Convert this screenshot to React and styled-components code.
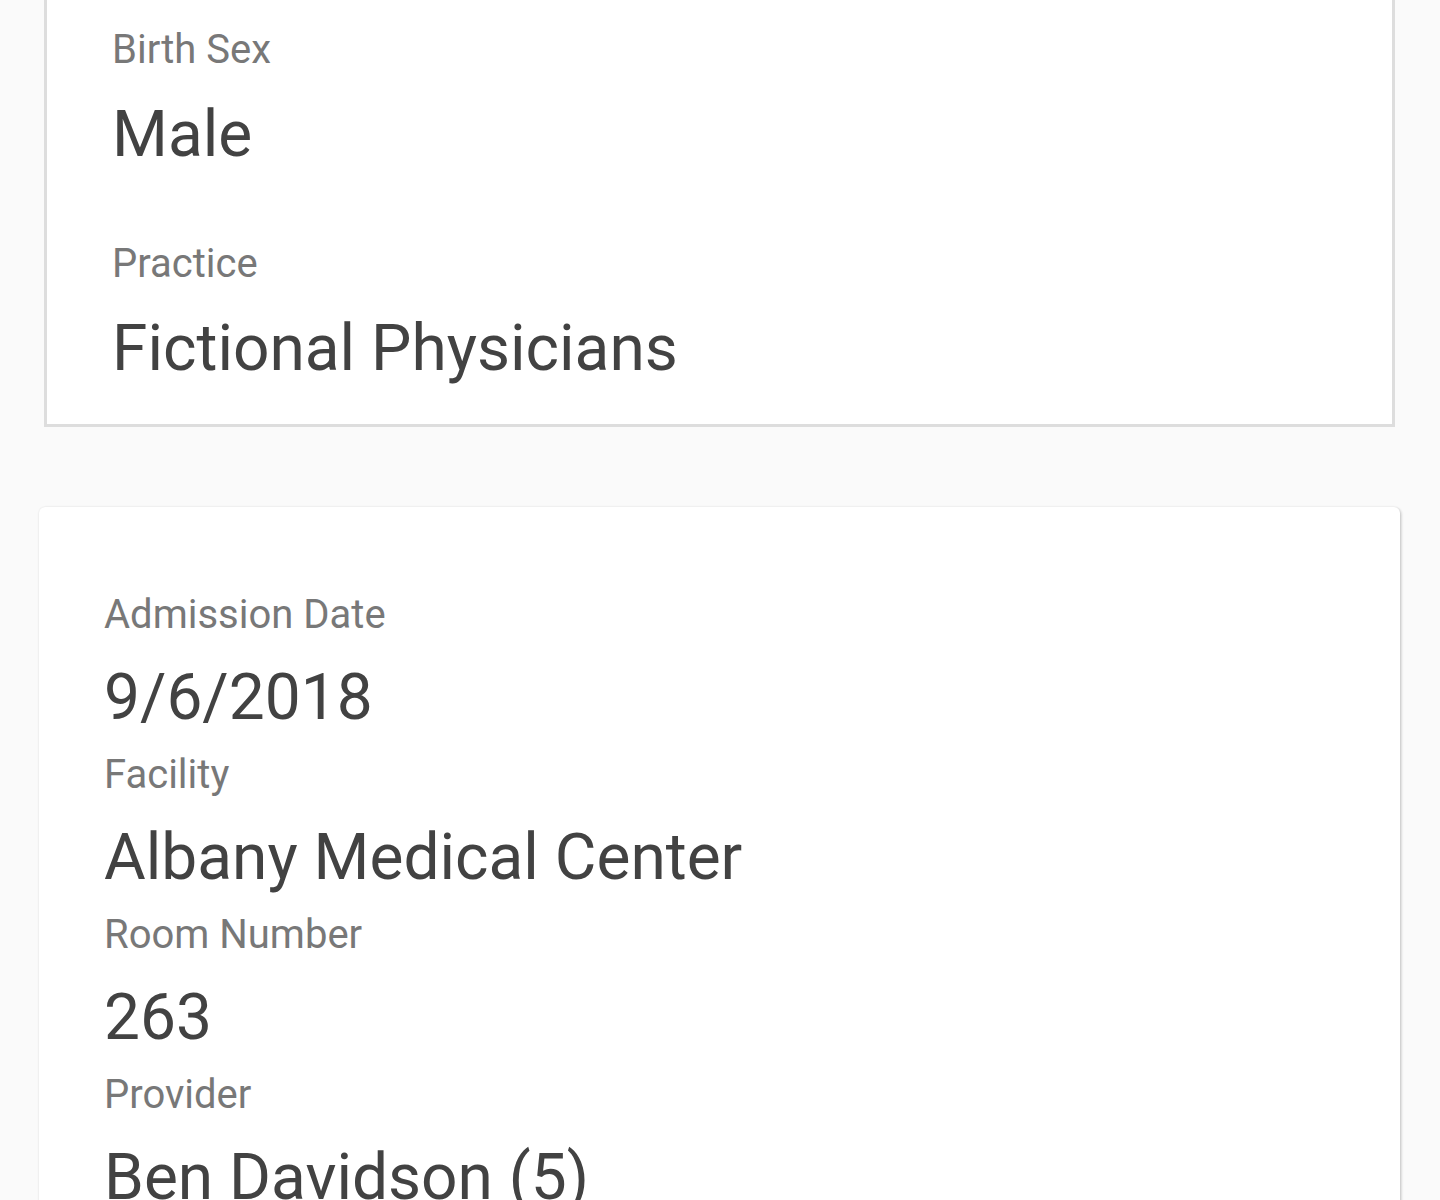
import React from "react";
import styled, { createGlobalStyle } from "styled-components";

const Global = createGlobalStyle`
  html, body { margin: 0; padding: 0; background: #fafafa; }
  body { font-family: Roboto, "Noto Sans", "Liberation Sans", sans-serif; overflow: hidden; }
`;

const Page = styled.div`
  display: flex;
  flex-direction: column;
  gap: 80px;
  padding: 0 40px 0 39px;
`;

const OutlinedCard = styled.section`
  margin: -6px 5px 0 5px;
  background: #fff;
  border: 3px solid #dddddd;
  padding: 31px 66px 37px 65px;
  display: flex;
  flex-direction: column;
`;

const ElevatedCard = styled.section`
  background: #fff;
  border-radius: 6px;
  box-shadow: 1px 1px 3px rgba(0, 0, 0, 0.16), 2px 2px 3px rgba(0, 0, 0, 0.05), 0 0 2px rgba(0,0,0,0.08);
  padding: 86px 66px 40px 65px;
  display: flex;
  flex-direction: column;
  min-height: 800px;
`;

const Field = styled.div`
  display: flex;
  flex-direction: column;
  gap: ${(p) => p.$gap}px;
  margin-bottom: ${(p) => p.$after}px;
`;

const Label = styled.div`
  font-size: 40px;
  line-height: 44px;
  color: #787878;
`;

const Value = styled.div`
  font-size: 64px;
  line-height: 76px;
  color: #424242;
`;

const top = [
  { label: "Birth Sex", value: "Male" },
  { label: "Practice", value: "Fictional Physicians" },
];

const admission = [
  { label: "Admission Date", value: "9/6/2018" },
  { label: "Facility", value: "Albany Medical Center" },
  { label: "Room Number", value: "263" },
  { label: "Provider", value: "Ben Davidson (5)" },
];

export default function App() {
  return (
    <Page>
      <Global />
      <OutlinedCard>
        {top.map((f, i) => (
          <Field key={f.label} $gap={25} $after={i < top.length - 1 ? 69 : 0}>
            <Label>{f.label}</Label>
            <Value>{f.value}</Value>
          </Field>
        ))}
      </OutlinedCard>
      <ElevatedCard>
        {admission.map((f) => (
          <Field key={f.label} $gap={23} $after={17}>
            <Label>{f.label}</Label>
            <Value>{f.value}</Value>
          </Field>
        ))}
      </ElevatedCard>
    </Page>
  );
}
